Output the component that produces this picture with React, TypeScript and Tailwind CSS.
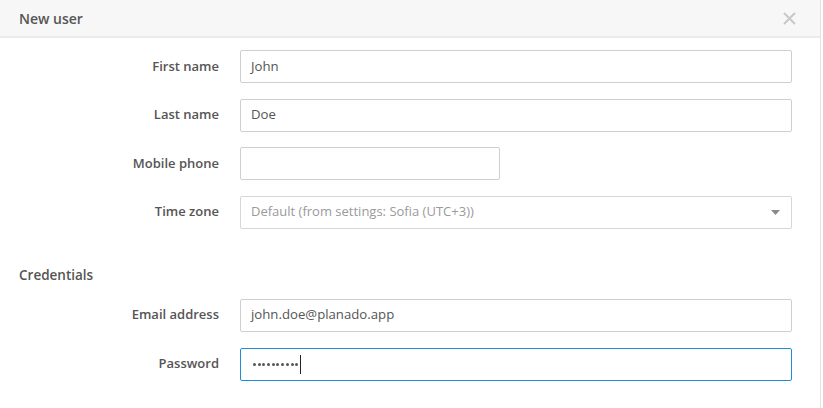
import React from "react";

const font = { fontFamily: '"Open Sans", "Liberation Sans", sans-serif' };

function Row({ label, children }: { label: string; children: React.ReactNode }) {
  return (
    <div className="flex items-center h-[33px]">
      <div className="w-[219px] text-right text-[13px] font-semibold text-[#555]">{label}</div>
      <div className="ml-[21px] flex-1">{children}</div>
    </div>
  );
}

function TextBox({ value, w }: { value?: string; w?: string }) {
  return (
    <div
      className={`h-[33px] border border-[#cfcfcf] rounded-[2px] bg-white flex items-center pl-[10px] text-[13.2px] text-[#555] ${w ?? "w-[552px]"}`}
    >
      {value}
    </div>
  );
}

export default function App() {
  const dots = Array.from({ length: 10 });
  return (
    <div className="w-[823px] h-[408px] bg-white overflow-hidden" style={font}>
      <div className="w-[821px] h-[408px] border-r border-[#e3e3e3]">
        <div className="h-[38px] bg-[#f7f7f7] border-b-2 border-[#ebebeb] flex items-center justify-between pl-[19px] pr-[24px]">
          <div className="text-[14px] font-semibold text-[#555]">New user</div>
          <svg width="13" height="13" viewBox="0 0 13 13" className="mt-[1px]">
            <path d="M1 1 L12 12 M12 1 L1 12" stroke="#c8c8c8" strokeWidth="2" />
          </svg>
        </div>
        <div className="pt-[12px] flex flex-col gap-[15.5px]">
          <Row label="First name">
            <TextBox value="John" />
          </Row>
          <Row label="Last name">
            <TextBox value="Doe" />
          </Row>
          <Row label="Mobile phone">
            <TextBox w="w-[260px]" />
          </Row>
          <Row label="Time zone">
            <div className="h-[33px] w-[552px] border border-[#d6d6d6] rounded-[2px] bg-white flex items-center justify-between pl-[10px] pr-[11px] text-[13px] text-[#9a9a9a]">
              <span>Default (from settings: Sofia (UTC+3))</span>
              <svg width="9" height="5" viewBox="0 0 9 5">
                <path d="M0 0 H9 L4.5 5 Z" fill="#8a8a8a" />
              </svg>
            </div>
          </Row>
        </div>
        <div className="mt-[37px] h-[20px] flex items-center pl-[19px] text-[13.5px] font-semibold text-[#555]">
          Credentials
        </div>
        <div className="mt-[13px] flex flex-col gap-[16px]">
          <Row label="Email address">
            <TextBox value="john.doe@planado.app" />
          </Row>
          <Row label="Password">
            <div className="h-[33px] w-[552px] border border-[#1f8dd6] rounded-[2px] bg-white flex items-center pl-[12px]">
              <div className="flex items-center gap-[1.7px]">
                {dots.map((_, i) => (
                  <span key={i} className="w-[3px] h-[3px] rounded-full bg-[#555]" />
                ))}
              </div>
              <span className="ml-[2px] w-[1px] h-[19px] bg-[#222]" />
            </div>
          </Row>
        </div>
      </div>
    </div>
  );
}
